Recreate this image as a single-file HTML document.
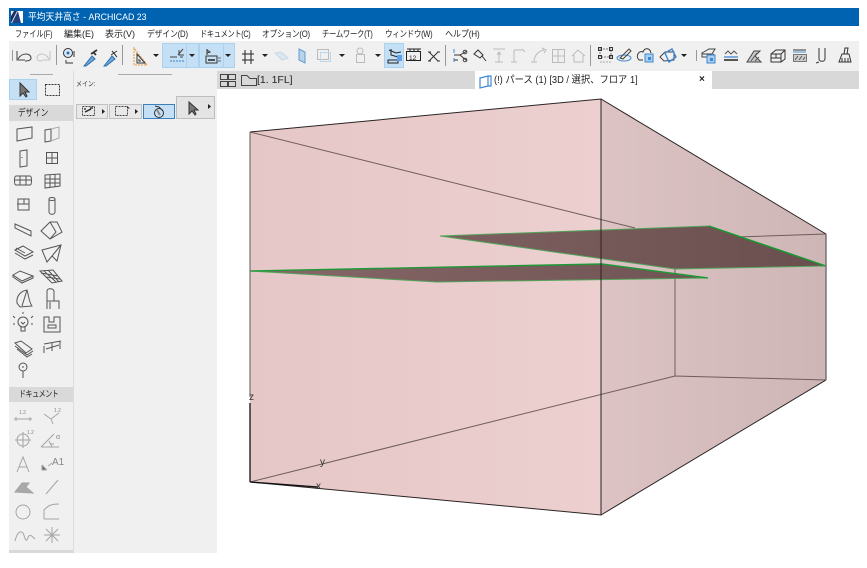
<!DOCTYPE html>
<html><head><meta charset="utf-8">
<style>
html,body{margin:0;padding:0;background:#fff}
body{width:867px;height:568px;position:relative;overflow:hidden;font-family:"Liberation Sans","Noto Sans CJK JP",sans-serif}
.b{position:absolute}
.t{position:absolute;white-space:nowrap;line-height:1;color:#222;font-size:9px;transform-origin:0 50%}
svg{position:absolute;left:0;top:0}
</style></head><body>
<div class="b" style="left:9px;top:8px;width:850px;height:18px;background:#0063b1"></div>
<div class="b" style="left:9px;top:41px;width:850px;height:30px;background:#f0f0f0"></div>
<div class="b" style="left:217px;top:71px;width:642px;height:18px;background:#d8d8d8"></div>
<div class="b" style="left:475px;top:71px;width:237px;height:18px;background:#fff"></div>
<div class="b" style="left:9px;top:71px;width:64px;height:482px;background:#f0f0f0"></div>
<div class="b" style="left:74px;top:71px;width:143px;height:482px;background:#f0f0f0"></div>
<div class="b" style="left:73px;top:71px;width:1px;height:482px;background:#dcdcdc"></div>
<div class="b" style="left:9px;top:105px;width:64px;height:16px;background:#d9d9d9"></div>
<div class="b" style="left:9px;top:387px;width:64px;height:15px;background:#d9d9d9"></div>
<div class="b" style="left:9px;top:550px;width:64px;height:3px;background:#d9d9d9"></div>

<div class="t" style="left:28px;top:13px;color:#fff;font-size:9.5px;transform:scaleX(.924)">平均天井高さ - ARCHICAD 23</div>
<div class="t" style="left:15px;top:30px;transform:scaleX(.79)">ファイル(F)</div>
<div class="t" style="left:64px;top:30px">編集(E)</div>
<div class="t" style="left:105px;top:30px">表示(V)</div>
<div class="t" style="left:147px;top:30px;letter-spacing:-.2px;transform:scaleX(.87)">デザイン(D)</div>
<div class="t" style="left:200px;top:30px;letter-spacing:-.4px;transform:scaleX(.8)">ドキュメント(C)</div>
<div class="t" style="left:262px;top:30px;letter-spacing:-.3px;transform:scaleX(.86)">オプション(O)</div>
<div class="t" style="left:322px;top:30px;letter-spacing:-.4px;transform:scaleX(.82)">チームワーク(T)</div>
<div class="t" style="left:385px;top:30px;letter-spacing:-.4px;transform:scaleX(.84)">ウィンドウ(W)</div>
<div class="t" style="left:445px;top:30px;letter-spacing:-.2px;transform:scaleX(.9)">ヘルプ(H)</div>
<div class="t" style="left:257px;top:76px;font-size:10px;transform:scaleX(1.05)">[1. 1FL]</div>
<div class="t" style="left:494px;top:76px;font-size:10px;transform:scaleX(.93)">(!) パース (1) [3D / 選択、フロア 1]</div>
<div class="t" style="left:699px;top:75px;font-size:10px;font-weight:bold">×</div>
<div class="t" style="left:18px;top:109px;font-size:9.5px;transform:scaleX(.8)">デザイン</div>
<div class="t" style="left:19px;top:390px;font-size:9px;letter-spacing:-.6px;transform:scaleX(.78)">ドキュメント</div>
<div class="t" style="left:76px;top:81px;font-size:7px;color:#333;transform:scaleX(.85)">メイン:</div>

<!-- 3D view -->
<svg width="867" height="568" viewBox="0 0 867 568">
<defs>
<linearGradient id="f" x1="250" x2="601" y1="0" y2="0" gradientUnits="userSpaceOnUse"><stop offset="0" stop-color="#e5c7c7"/><stop offset=".5" stop-color="#e9cbcb"/><stop offset="1" stop-color="#eccfcf"/></linearGradient>
<linearGradient id="r" x1="601" x2="826" y1="0" y2="0" gradientUnits="userSpaceOnUse"><stop offset="0" stop-color="#ddc3c3"/><stop offset="1" stop-color="#ceb6b6"/></linearGradient>
<linearGradient id="p" x1="250" x2="826" y1="0" y2="0" gradientUnits="userSpaceOnUse"><stop offset="0" stop-color="#876767"/><stop offset="1" stop-color="#6a4f4f"/></linearGradient>
</defs>
<polygon points="250,132 601,99 601,515 250,482" fill="url(#f)"/>
<polygon points="601,99 826,234 826,380 601,515" fill="url(#r)"/>
<g fill="none" stroke="#6f5c5c" stroke-width="1">
<path d="M250 132L635 228M675 239L826 234M675 269V376M675 376L826 380M675 376L250 482"/>
</g>
<polygon points="440,236 709,226 826,266 675,269" fill="url(#p)"/>
<polygon points="250,271 602,264 708,278 437,282" fill="url(#p)"/>
<g fill="none" stroke="#52a45a" stroke-width="1">
<path d="M440 236L675 269L826 266M250 271L437 282L708 278"/>
<path d="M440 236L709 226"/>
</g>
<path d="M250 271L602 264L708 278" fill="none" stroke="#1d9a36" stroke-width="1.4"/>
<path d="M709 226L826 266" fill="none" stroke="#10a030" stroke-width="1.4"/>
<g fill="none" stroke="#2b2323" stroke-width="1">
<path d="M601 99V515M250 132L601 99L826 234M250 482L601 515L826 380"/>
</g>
<path d="M250 132V397" stroke="#7a7070" stroke-width="1.2"/>
<path d="M826 234V380" stroke="#6d6d6d" stroke-width="1.4"/>
<path d="M250 403V482" stroke="#111" stroke-width="1.3"/>
<path d="M250 482L318 487" stroke="#111" stroke-width="1.3"/>
<text x="249" y="400" font-size="10" fill="#333" font-family="Liberation Sans">z</text>
<text x="320" y="465" font-size="10" fill="#333" font-family="Liberation Sans">y</text>
<text x="316" y="489" font-size="10" fill="#333" font-family="Liberation Sans">x</text>
</svg>

<!-- UI icons -->
<svg width="867" height="568" viewBox="0 0 867 568" style="filter:blur(.35px)" fill="none" stroke="#444" stroke-width="1">
<!-- logo -->
<rect x="11" y="11" width="12" height="12" fill="#e8eef5" stroke="none"/><path d="M11 23L17 11H14L11 16Z" fill="#1c2f5f" stroke="none"/><path d="M12 23L18 11L21 23Z" fill="#24407a" stroke="none"/><path d="M18 11L21 23H23V11Z" fill="#fff" stroke="none"/>
<!-- toolbar highlights -->
<rect x="162.500" y="43.500" width="36" height="24" fill="#c5e0f5" stroke="#a9d2f0"/><path d="M186.500 44V67" stroke="#a9d2f0"/>
<rect x="199.500" y="43.500" width="35" height="24" fill="#c5e0f5" stroke="#a9d2f0"/><path d="M223.500 44V67" stroke="#a9d2f0"/>
<rect x="384.500" y="43.500" width="19" height="24" fill="#c5e0f5" stroke="#a9d2f0"/>
<!-- seps -->
<path d="M12.500 50V61M56.500 45V65M122.500 45V65M445.500 45V66M590.500 45V66M696.500 50V61" stroke="#999"/>
<!-- undo/redo -->
<path d="M17 51V60H25M18 59C22 52 31 53 31 58C31 61 27 61 25 61"/>
<path d="M50 51V60H42M49 59C45 52 37 53 37 58C37 61 40 61 42 61" stroke="#c4c4c4"/>
<!-- find -->
<circle cx="68" cy="53" r="4.500" stroke="#333" fill="#d9ebf8"/><path d="M66 60V63H73M74 51V57" stroke="#333"/><circle cx="68" cy="53" r="1.500" fill="#2a6fb5" stroke="none"/>
<!-- droppers -->
<path d="M84 66L92 56L95 59L86 66Z" fill="#6aa8dc" stroke="#2f6ea8"/><path d="M91 54L97 50M93 52L96 55" stroke="#333" stroke-width="1.700"/>
<path d="M104 66L112 56L115 59L106 66Z" fill="#6aa8dc" stroke="#2f6ea8"/><path d="M111 55L117 51M112 51L117 57" stroke="#333"/>
<!-- triangle tool -->
<path d="M134 48V65H147Z" stroke="#e8963c" stroke-dasharray="2 1"/><path d="M137 54V63H145Z" stroke="#333"/><path d="M139 59V61H141" stroke="#333"/>
<!-- dd arrows -->
<path d="M153 54h6l-3 3zM189 54h6l-3 3zM225 54h6l-3 3zM262 54h6l-3 3zM339 54h6l-3 3zM375 54h6l-3 3zM681 54h6l-3 3z" fill="#222" stroke="none"/>
<!-- snap line -->
<path d="M170 57H177M180 57H183M178 55L183 49M179 50V55H184" stroke="#444"/><path d="M170 61H184" stroke="#2f7fd0" stroke-dasharray="2 1"/>
<!-- xy -->
<rect x="206" y="56" width="11" height="7" stroke="#333"/><path d="M207 49V55M207 50L210 52L207 53" stroke="#333"/><path d="M218 58H221M218 61H221" stroke="#666"/><path d="M208 60H215" stroke="#222" stroke-width="1.500"/>
<!-- grid -->
<path d="M245 50V64M251 50V64M242 54H254M242 60H254" stroke="#222"/>
<!-- slab gray -->
<path d="M275 53L281 52L288 58L282 60Z" stroke="#c6d8e6" fill="#dce8f1"/>
<path d="M299 49L305 52V63L299 60Z" stroke="#5f9bd1" fill="#b9d3ea"/>
<rect x="317.500" y="49.500" width="11" height="10" stroke="#bbb"/><rect x="320.500" y="52.500" width="10" height="9" stroke="#bed7ed"/>
<circle cx="360" cy="51" r="3" stroke="#bbb"/><rect x="356.500" y="54.500" width="8" height="8" stroke="#bbb"/>
<!-- model -->
<path d="M389 50L396 53L401 52M391 49V55L398 57" stroke="#222"/><rect x="388" y="60" width="10" height="3" stroke="#222"/><rect x="397" y="55" width="5" height="6" fill="#5ba3e6" stroke="none"/>
<rect x="406.500" y="51.500" width="14" height="9" stroke="#222"/><path d="M407 49H421M410 49V51M414 49V51M418 49V51" stroke="#222"/><text x="409" y="60" font-size="6.500" fill="#222" stroke="none" font-family="Liberation Sans">12</text>
<path d="M429 52L438 61M438 52L429 61M428 52H431M437 52H440M428 61H431M437 61H440" stroke="#333"/>
<!-- right tools -->
<path d="M454 49V53M454 58V62" stroke="#3f88d0"/><path d="M454 55H460L467 51M460 55L467 61M454 60H458" stroke="#333"/><circle cx="465" cy="52" r="1.800"/><circle cx="465" cy="60" r="1.800"/>
<path d="M474 54L478 50L483 55L480 58ZM482 56L486 61" stroke="#333"/>
<path d="M493 49H505M499 62V53M497 55L499 52L501 55M495 62H503" stroke="#bbb"/>
<path d="M514 50H522M514 50V62M511 62H517M522 49L525 52" stroke="#bbb"/>
<path d="M534 62C534 55 539 51 544 50M542 48L546 50L544 53M531 62H537" stroke="#bbb"/>
<rect x="552.500" y="49.500" width="12" height="13" stroke="#bbb"/><path d="M552 56H564M558 50V63" stroke="#bbb"/>
<path d="M572 56L578 50L585 56M574 55V62H583V55" stroke="#bbb"/>
<!-- far right -->
<rect x="600" y="49" width="11" height="8" stroke="#777" stroke-dasharray="2 1"/><rect x="598.500" y="47.500" width="3" height="3" stroke="#333"/><rect x="609.500" y="47.500" width="3" height="3" stroke="#333"/><rect x="598.500" y="55.500" width="3" height="3" stroke="#333"/><rect x="609.500" y="55.500" width="3" height="3" stroke="#333"/><path d="M600 62H612" stroke="#aaa" stroke-dasharray="2 1"/>
<ellipse cx="624" cy="58" rx="7" ry="3" stroke="#4a8ed0"/><path d="M620 58L629 49L631 51L623 59Z" stroke="#444"/>
<path d="M639 60C635 56 639 50 643 52C645 47 650 48 651 53M639 60H643" stroke="#333"/><rect x="645" y="54" width="8" height="8" fill="#a9d0f3" stroke="#3f88d0"/><rect x="648" y="57" width="3" height="3" fill="#3f88d0" stroke="none"/>
<path d="M660 57L665 52L674 52L674 60L664 61Z" stroke="#444"/><path d="M665 53L672 49L676 57L669 62Z" stroke="#3f88d0" stroke-width="1.400"/>
<path d="M702 53L709 49H715L712 54H703ZM702 53V57H711L714 54" stroke="#444"/><rect x="707" y="55" width="8" height="8" fill="#a9d0f3" stroke="#3f88d0"/><rect x="710" y="58" width="3" height="3" fill="#3f88d0" stroke="none"/>
<path d="M725 54L728 51L731 54L734 51L737 54" stroke="#555"/><path d="M724 57H738" stroke="#3f88d0" stroke-width="1.300"/><path d="M724 60H738" stroke="#222" stroke-width="1.500"/>
<path d="M747 62L754 51H760L755 56L761 62Z" stroke="#444" fill="#c9c9c9"/><path d="M751 61L757 53M755 61L759 57" stroke="#555"/>
<path d="M771 54L776 50H785V59L781 62H771ZM771 54H781V62M781 54L785 50M771 58H781M776 54V58" stroke="#333"/>
<path d="M793 50H806" stroke="#333"/><path d="M793 52H806" stroke="#6aa0d5" stroke-width="1.200"/><rect x="793.500" y="54.500" width="13" height="7" stroke="#777" fill="#cfcfcf"/><path d="M795 60L798 56M799 60L802 56M803 60L805 57" stroke="#555"/>
<path d="M819 48V59C819 62 825 62 825 59V48M819 62L816 63" stroke="#333"/>
<path d="M845 48H848L847 54H844ZM842 54H849L851 62H839ZM842 58V62M845 58V62M848 58V62" stroke="#333"/>
<!-- tab icons -->
<path d="M220.500 74.500H227.500V79.500H220.500ZM228.500 74.500H235.500V79.500H228.500ZM220.500 81.500H227.500V86.500H220.500ZM228.500 81.500H235.500V86.500H228.500Z" stroke="#444"/>
<path d="M241.500 85.500V75.500H247L250 78.500H256.500V85.500Z" stroke="#444"/>
<path d="M480 78L488 76V86L480 88ZM488 76H491V86H488" stroke="#3f88d0" stroke-width="1.200"/>
<!-- handles -->
<path d="M30 74.500H53M118 74.500H172" stroke="#aaa"/>
<!-- left select -->
<rect x="9.500" y="79.500" width="27" height="20" fill="#c5e0f5" stroke="#a9d2f0"/>
<path d="M20 83V96L23 93L26 97L27 96L25 92H29Z" fill="#777" stroke="#333"/>
<rect x="45.500" y="84.500" width="14" height="11" stroke="#333" stroke-dasharray="2 1"/>
<!-- info buttons -->
<rect x="76.500" y="104.500" width="31" height="14" fill="#e8e8e8" stroke="#c0c0c0"/>
<rect x="82.500" y="106.500" width="12" height="9" stroke="#444" stroke-dasharray="2 1"/><path d="M85 112L91 109M84 109h2M90 108h3" stroke="#222" stroke-width="1.300"/><path d="M102 109l3 2.500l-3 2.500z" fill="#222" stroke="none"/>
<rect x="109.500" y="104.500" width="32" height="14" fill="#e8e8e8" stroke="#c0c0c0"/>
<rect x="115.500" y="106.500" width="12" height="9" stroke="#444" stroke-dasharray="2 1"/><path d="M127 106l3 2.500h-3zM135 109l3 2.500l-3 2.500z" fill="#222" stroke="none"/>
<rect x="143.500" y="104.500" width="31" height="14" fill="#c5e0f5" stroke="#3d7fb8"/>
<circle cx="159" cy="113" r="4.500" stroke="#333"/><path d="M155 106L159 107L163 111" stroke="#333"/><path d="M157 110L160 115" stroke="#888" stroke-width="2"/>
<rect x="176.500" y="96.500" width="38" height="22" fill="#e4e4e4" stroke="#bdbdbd"/>
<path d="M189 102V114L192 111L195 115L196 114L194 110H198Z" fill="#777" stroke="#333"/><path d="M208 104l3 2.500l-3 2.500z" fill="#222" stroke="none"/>

<!-- design tools -->
<g stroke="#555">
<path d="M17 129L32 127V138L17 141Z"/>
<path d="M45 130L51 129V141L45 142Z"/><path d="M51 129L59 127V138L51 141" stroke="#aaa"/>
<path d="M20 151L27 150V166L20 167ZM22 157V158"/>
<rect x="46.500" y="152.500" width="11" height="11"/><path d="M46 158H58M52 152V164"/>
<path d="M16 176H30C32 176 32 185 30 185H16C14 185 14 176 16 176ZM20 176V185M26 176V185M15 180H32"/>
<path d="M45 175L60 174V186L45 188ZM50 175V187M55 174V187M45 179H60M45 183H60"/>
<path d="M18 199H29V210H18ZM17 204H29M24 199V204"/>
<path d="M49 199C49 197 55 197 55 199V212C55 215 49 215 49 212ZM49 199C49 201 55 201 55 199"/>
<path d="M15 224L31 231V236L15 228Z"/>
<path d="M41 231L50 222H57L62 232L50 239Z M50 222L56 232L50 239"/>
<path d="M15 250L23 246L33 252L25 256ZM15 253L25 259L33 255M16 248L25 253" />
<path d="M42 250L61 245L57 261L52 256L47 262Z M52 256L61 245"/>
<path d="M13 275L20 271L33 276L22 281ZM13 275V277L22 283L33 278V276"/>
<path d="M40 271L53 270L62 281L52 283ZM44 271L56 282M48 270L59 282M41 273L58 276M46 277L60 279"/>
<path d="M17 303C16 296 21 291 27 290C29 297 29 302 32 306L20 307ZM27 290L22 306"/>
<path d="M47 291C47 288 53 288 54 291L54 301H59V309M47 291V309M47 301H54M50 302V309"/>
<circle cx="23" cy="322" r="5"/><path d="M21 327H25V331H21ZM15 318L13 316M31 318L33 316M15 324H13M31 324H33M23 314V312M21 322L23 324L25 322"/>
<path d="M44 317H49V322H54V317H60V332H44ZM48 325H56V328H48Z"/>
<path d="M15 343L21 341L32 349L26 353ZM15 346L27 355L33 351M17 349L27 357L32 354"/>
<path d="M44 346V353M44 344L61 341M46 349L59 345M52 343V351M60 341V349"/>
<circle cx="23" cy="367" r="4"/><path d="M23 371V378M23 366V368"/>
</g>
<!-- document tools -->
<g stroke="#a5a5a5">
<path d="M14 419H32M16 417V421M30 417V421"/>
<path d="M44 414L51 419L59 413M51 419L53 424"/>
<circle cx="23" cy="440" r="6"/><path d="M23 432V448M15 440H31"/>
<path d="M41 447L54 434M41 447H59M49 441L52 447M50 444H54"/>
<path d="M17 472L23 457L29 472M19 467H27"/>
<path d="M47 470L42 465M42 465V470H46" fill="#666"/><path d="M48 466L52 463"/>
<path d="M15 492L22 483H29L26 487L33 493Z" fill="#a9a9a9"/>
<path d="M46 494L58 480"/>
<circle cx="23" cy="512" r="7"/>
<path d="M44 519V510C48 506 50 504 59 504M44 519H59"/>
<path d="M15 541C17 533 20 530 23 533C25 537 25 541 27 540C29 533 31 535 35 539"/>
<path d="M44 535H60M52 527V543M46 529L58 541M58 529L46 541"/>
</g>
</svg>
<div class="t" style="left:19px;top:411px;font-size:5px;color:#888">1.2</div>
<div class="t" style="left:54px;top:409px;font-size:5px;color:#888">1.2</div>
<div class="t" style="left:27px;top:431px;font-size:5px;color:#888">1.2</div>
<div class="t" style="left:56px;top:434px;font-size:7px;color:#888">α</div>
<div class="t" style="left:52px;top:458px;font-size:10px;color:#888">A1</div>
</body></html>
